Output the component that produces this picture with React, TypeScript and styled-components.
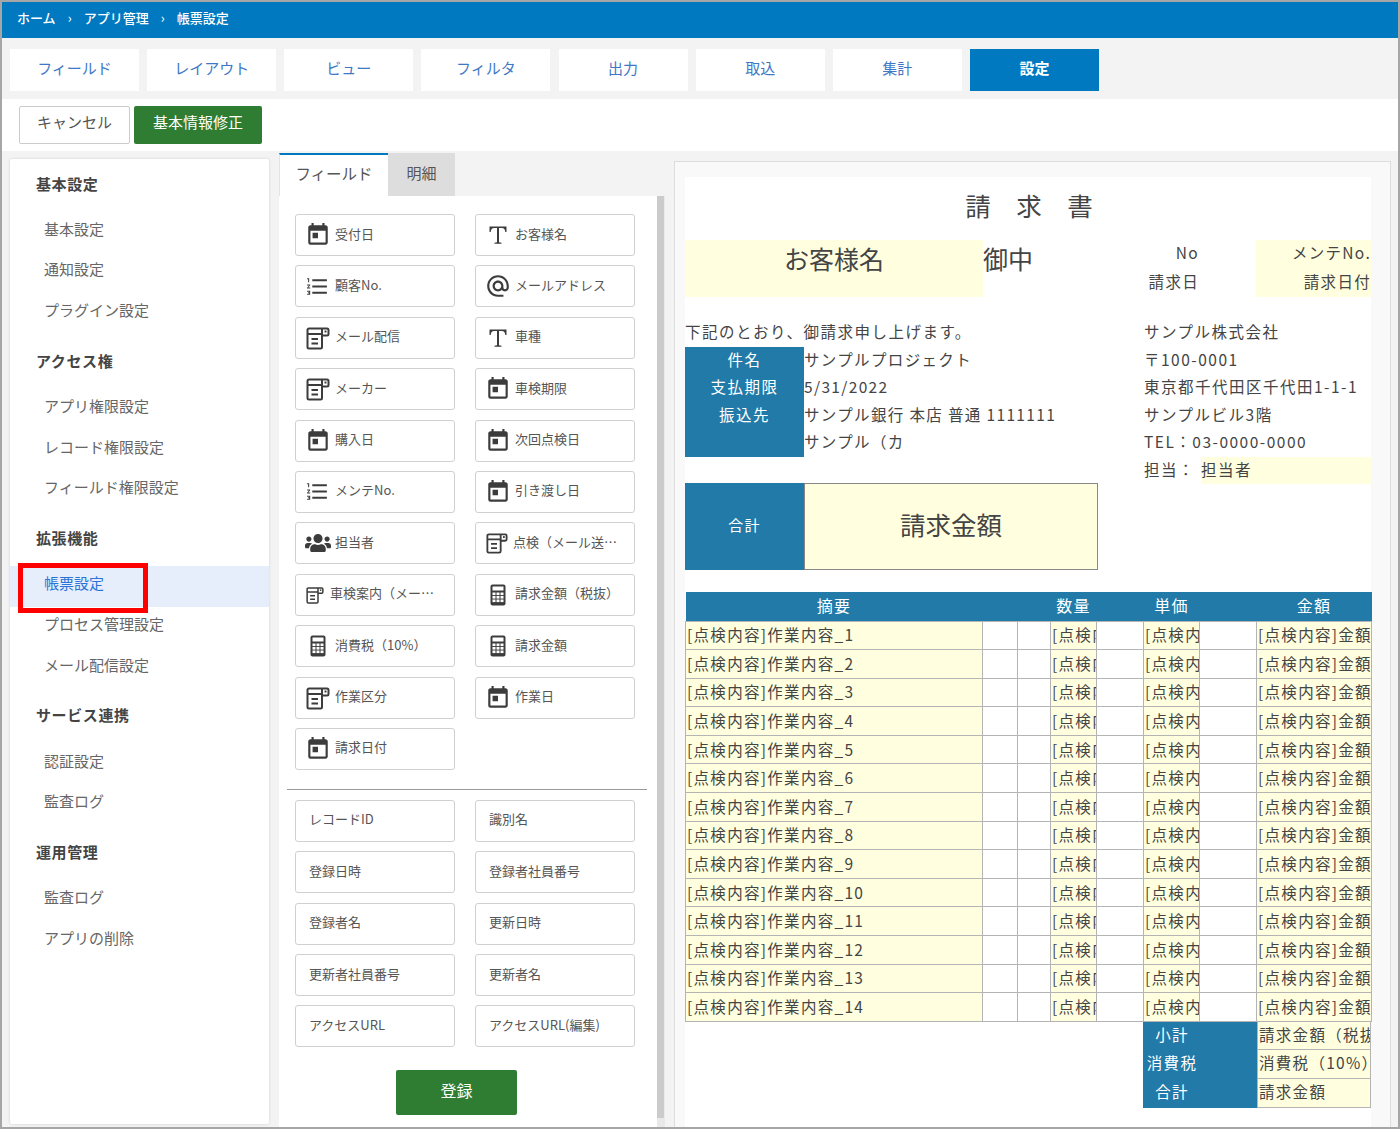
import React from 'react'
import styled, { createGlobalStyle } from 'styled-components'
import { MdToday, MdFormatListNumbered, MdAlternateEmail } from 'react-icons/md'
import { FaUsers } from 'react-icons/fa'

const GlobalStyle = createGlobalStyle`
  * {
    box-sizing: border-box;
  }
  html, body {
    margin: 0;
    padding: 0;
    background: #f3f3f3;
  }
  body {
    font-family: 'Noto Sans CJK JP', 'Roboto', sans-serif;
    color: #444;
  }
`

const Frame = styled.div`
  width: 1400px;
  height: 1129px;
  border: 2px solid #a6a6a6;
  background: #f3f3f3;
  overflow: hidden;
  display: flex;
  flex-direction: column;
`
const Breadcrumb = styled.div`
  height: 36px;
  flex: none;
  background: #0079c0;
  color: #fff;
  display: flex;
  align-items: center;
  padding: 0 0 6px 15px;
  font-size: 13px;
  font-weight: 500;
`
const Crumb = styled.span`
  display: inline-block;
`
const CrumbArrow = styled.span`
  display: inline-block;
  width: 28px;
  text-align: center;
  font-weight: 400;
`
const TabBar = styled.div`
  height: 61px;
  flex: none;
  display: flex;
  gap: 8.15px;
  padding: 11px 0 0 8px;
`
const TopTab = styled.div<{ $active?: boolean }>`
  width: 129px;
  height: 42px;
  padding-bottom: 6px;
  display: flex;
  align-items: center;
  justify-content: center;
  font-size: 15px;
  font-weight: ${p => (p.$active ? 700 : 400)};
  color: ${p => (p.$active ? '#fff' : '#3f78c6')};
  background: ${p => (p.$active ? '#0079c0' : '#fff')};
`
const ActionBar = styled.div`
  height: 52px;
  flex: none;
  background: #fff;
  display: flex;
  gap: 4px;
  padding: 7px 0 0 17px;
`
const CancelButton = styled.div`
  width: 111px;
  height: 38px;
  padding-bottom: 7px;
  border: 1px solid #ccc;
  border-radius: 2px;
  background: #fff;
  color: #555;
  font-size: 15px;
  display: flex;
  align-items: center;
  justify-content: center;
`
const GreenButton = styled.div`
  width: 128px;
  height: 38px;
  padding-bottom: 7px;
  border-radius: 2px;
  background: #2e7d32;
  color: #fff;
  font-size: 15px;
  display: flex;
  align-items: center;
  justify-content: center;
`
const Main = styled.div`
  flex: 1;
  min-height: 0;
  display: flex;
  padding: 2px 0 0 8px;
`
const Sidebar = styled.div`
  width: 259px;
  flex: none;
  height: 965px;
  margin-top: 6px;
  padding-top: 8px;
  background: #fff;
  box-shadow: 0 0 3px rgba(0, 0, 0, 0.15);
  border-radius: 2px;
`
const SideSection = styled.div`
  margin-bottom: 11px;
`
const SideHead = styled.div`
  height: 40px;
  margin-bottom: 4.5px;
  padding: 0 0 8px 26px;
  display: flex;
  align-items: center;
  font-size: 15px;
  font-weight: 700;
  letter-spacing: 0.6px;
  color: #444;
`
const SideItem = styled.div<{ $active?: boolean }>`
  position: relative;
  height: 40.6px;
  padding: 0 0 7px 34px;
  display: flex;
  align-items: center;
  font-size: 15px;
  color: ${p => (p.$active ? '#2a73d9' : '#666')};
  background: ${p => (p.$active ? '#e6eefb' : 'transparent')};
`
const RedMark = styled.div`
  position: absolute;
  left: 8px;
  top: -3px;
  width: 130px;
  height: 50px;
  border: 5px solid #f00;
  z-index: 2;
`
const Center = styled.div`
  width: 386px;
  flex: none;
  margin-left: 10px;
  display: flex;
  flex-direction: column;
`
const PanelTabs = styled.div`
  height: 43px;
  flex: none;
  display: flex;
`
const PanelTab = styled.div<{ $active?: boolean }>`
  width: ${p => (p.$active ? '109px' : '67px')};
  padding-bottom: 6px;
  display: flex;
  align-items: center;
  justify-content: center;
  font-size: ${p => (p.$active ? '15.5px' : '15px')};
  color: #555;
  background: ${p => (p.$active ? '#fff' : '#ddd')};
  border-top: 2px solid ${p => (p.$active ? '#0079c0' : '#ddd')};
  border-left: ${p => (p.$active ? '1px solid #e4e4e4' : 'none')};
`
const PanelBody = styled.div`
  flex: 1;
  min-height: 0;
  display: flex;
`
const PanelContent = styled.div`
  width: 378px;
  flex: none;
  background: #fff;
  padding: 18px 10px 0 8px;
`
const ScrollTrack = styled.div`
  width: 8px;
  flex: none;
  background: #e9e9e9;
`
const ScrollThumb = styled.div`
  width: 7px;
  height: 922px;
  background: #cbcbcb;
`
const FieldGrid = styled.div`
  display: grid;
  grid-template-columns: 160px 160px;
  column-gap: 20px;
  row-gap: 9.4px;
  padding-left: 8px;
`
const FieldButton = styled.div`
  height: 42px;
  border: 1px solid #d0d0d0;
  border-radius: 3px;
  display: flex;
  align-items: center;
  padding-right: 15px;
  font-size: 13px;
  color: #555;
  background: #fff;
`
const IconSlot = styled.span<{ $width: number }>`
  width: ${p => p.$width}px;
  margin-left: 4px;
  flex: none;
  display: flex;
  align-items: center;
  justify-content: center;
  color: #3c3c3c;
`
const FieldName = styled.span`
  min-width: 0;
  padding-bottom: 4px;
  white-space: nowrap;
  overflow: hidden;
  text-overflow: ellipsis;
`
const SystemButton = styled(FieldButton)`
  padding: 0 0 4px 13px;
`
const Divider = styled.hr`
  margin: 19px 0 10px;
  border: none;
  border-top: 1px solid #999;
  height: 0;
`
const SubmitRow = styled.div`
  display: flex;
  justify-content: center;
  padding: 23px 21px 0 0;
`
const SubmitButton = styled.div`
  width: 121px;
  height: 45px;
  padding-bottom: 6px;
  background: #2e7d32;
  border-radius: 2px;
  color: #fff;
  font-size: 16px;
  display: flex;
  align-items: center;
  justify-content: center;
`
const PreviewCard = styled.div`
  width: 717px;
  flex: none;
  height: 968px;
  margin: 8px 0 0 9px;
  padding: 15px 19px 0 10px;
  background: #f9f9f9;
  border: 1px solid #ddd;
  border-bottom: none;
  overflow: hidden;
`
const Sheet = styled.div`
  width: 686px;
  height: 100%;
  background: #fff;
  color: #444;
  font-size: 15.5px;
  letter-spacing: 1.3px;
`
const SheetTitle = styled.div`
  height: 63px;
  padding: 10px 0 0 2px;
  text-align: center;
  font-size: 25.5px;
  letter-spacing: 0;
  line-height: 36px;
`
const BillTo = styled.div`
  height: 56px;
  display: grid;
  grid-template-columns: 298px 160px 56px 57px 115px;
`
const Yellow = `background: #ffffdf;`
const CustomerName = styled.div`
  ${Yellow}
  text-align: center;
  font-size: 25px;
  letter-spacing: 0;
  line-height: 36px;
`
const Goshu = styled.div`
  font-size: 25px;
  letter-spacing: 0;
  line-height: 36px;
`
const MetaLabels = styled.div`
  text-align: right;
  white-space: nowrap;
`
const MetaValues = styled.div`
  ${Yellow}
  grid-column: 5;
  text-align: right;
  white-space: nowrap;
  overflow: hidden;
`
const MetaRow = styled.div`
  height: 28.5px;
  line-height: 24.5px;
`
const InfoBlock = styled.div`
  height: 164px;
  margin-top: 23px;
  display: grid;
  grid-template-columns: 459px 1fr;
  line-height: 25.5px;
  letter-spacing: 1.5px;
`
const InfoRow = styled.div`
  height: 27.5px;
  white-space: nowrap;
`
const Subject = styled.div`
  display: grid;
  grid-template-columns: 119px 1fr;
`
const SubjectLabels = styled.div`
  background: #217aa8;
  color: #fff;
  text-align: center;
  height: 110px;
`
const SubjectValues = styled.div`
  letter-spacing: 1.35px;
`
const StaffRow = styled(InfoRow)`
  display: flex;
`
const StaffLabel = styled.span`
  width: 57px;
  flex: none;
`
const StaffValue = styled.span`
  ${Yellow}
  flex: 1;
`
const TotalBox = styled.div`
  width: 413px;
  height: 87px;
  display: grid;
  grid-template-columns: 119px 1fr;
`
const TotalLabel = styled.div`
  background: #217aa8;
  color: #fff;
  padding-bottom: 4px;
  display: flex;
  align-items: center;
  justify-content: center;
  font-size: 15px;
`
const TotalValue = styled.div`
  ${Yellow}
  padding-bottom: 6px;
  border: 1px solid #888;
  display: flex;
  align-items: center;
  justify-content: center;
  font-size: 25.5px;
  letter-spacing: 0;
`
const ItemTable = styled.table`
  width: 686px;
  margin-top: 22px;
  border-collapse: collapse;
  table-layout: fixed;
`
const HeadCell = styled.th`
  height: 29px;
  padding: 0 0 2px;
  background: #217aa8;
  color: #fff;
  font-weight: 400;
  font-size: 16px;
  text-align: center;
  overflow: visible;
  white-space: nowrap;
`
const BodyCell = styled.td<{ $fill?: boolean }>`
  height: 28.6px;
  padding: 0 0 2px 1px;
  border: 1px solid #b4b4b4;
  white-space: nowrap;
  overflow: hidden;
  ${p => (p.$fill ? Yellow : '')}
`
const Summary = styled.div`
  display: grid;
  grid-template-columns: 114px 114px;
  width: 228px;
  margin-left: 458px;
`
const SummaryLabels = styled.div`
  background: #217aa8;
  color: #fff;
  height: 85.8px;
`
const SummaryLabel = styled.div`
  width: 58px;
  height: 28.6px;
  line-height: 24.6px;
  text-align: center;
  white-space: nowrap;
`
const SummaryValue = styled.div`
  ${Yellow}
  height: 28.6px;
  line-height: 25px;
  border: 1px solid #b4b4b4;
  border-top: none;
  padding-left: 1px;
  white-space: nowrap;
  overflow: hidden;
`

type FieldKind = 'date' | 'text' | 'list' | 'mail' | 'form' | 'user' | 'calc'
type FieldDef = { name: string; kind: FieldKind; slot?: number; size?: number }

const FormIcon = ({ size = 24 }: { size?: number }) => (
  <svg width={size} height={size} viewBox="0 0 24 24" fill="none" stroke="currentColor" strokeWidth="2">
    <path d="M1.5 4a1.5 1.5 0 0 1 1.5-1.5h18A1.5 1.5 0 0 1 22.5 4v4a1.5 1.5 0 0 1-1.5 1.5h-5V21a1.5 1.5 0 0 1-1.5 1.5H3A1.5 1.5 0 0 1 1.5 21z" />
    <path d="M1.5 8h14.5M16 2.5v7M5.5 13h6.5M5.5 17.5h6.5" />
    <rect x="18.5" y="4.5" width="2" height="2" fill="currentColor" stroke="none" />
  </svg>
)

const SerifT = () => (
  <svg width="24" height="24" viewBox="0 0 24 24" fill="currentColor">
    <path d="M3.5 3.5h17v5.5h-1.2c-.3-2.600-1.200-4-3.500-4h-2.800v14.200l2.500.6v.9H8.500v-.9l2.500-.6V5H8.200c-2.300 0-3.200 1.400-3.500 4H3.500z" />
  </svg>
)

const CalcIcon = () => (
  <svg width="16" height="22" viewBox="0 0 16 22">
    <rect x="0.500" y="0.500" width="15" height="21" rx="2" fill="#3c3c3c" />
    <rect x="2.500" y="2.500" width="11" height="4" fill="#fff" />
    {[8.500, 12, 15.500].map(y =>
      [2.500, 6.500, 10.500].map(x => <rect key={`${x}-${y}`} x={x} y={y} width="3" height="2.600" fill="#fff" />)
    )}
  </svg>
)

const FieldIcon = ({ kind, size }: { kind: FieldKind; size?: number }) => {
  switch (kind) {
    case 'date':
      return <MdToday size={26} />
    case 'text':
      return <SerifT />
    case 'list':
      return <MdFormatListNumbered size={25} />
    case 'mail':
      return <MdAlternateEmail size={26} />
    case 'form':
      return <FormIcon size={size} />
    case 'user':
      return <FaUsers size={26} />
    default:
      return <CalcIcon />
  }
}

const sideMenu = [
  { head: '基本設定', items: ['基本設定', '通知設定', 'プラグイン設定'] },
  { head: 'アクセス権', items: ['アプリ権限設定', 'レコード権限設定', 'フィールド権限設定'] },
  { head: '拡張機能', items: ['帳票設定', 'プロセス管理設定', 'メール配信設定'] },
  { head: 'サービス連携', items: ['認証設定', '監査ログ'] },
  { head: '運用管理', items: ['監査ログ', 'アプリの削除'] },
]

const topTabs = ['フィールド', 'レイアウト', 'ビュー', 'フィルタ', '出力', '取込', '集計', '設定']

const fields: FieldDef[] = [
  { name: '受付日', kind: 'date' },
  { name: 'お客様名', kind: 'text' },
  { name: '顧客No.', kind: 'list' },
  { name: 'メールアドレス', kind: 'mail' },
  { name: 'メール配信', kind: 'form' },
  { name: '車種', kind: 'text' },
  { name: 'メーカー', kind: 'form' },
  { name: '車検期限', kind: 'date' },
  { name: '購入日', kind: 'date' },
  { name: '次回点検日', kind: 'date' },
  { name: 'メンテNo.', kind: 'list' },
  { name: '引き渡し日', kind: 'date' },
  { name: '担当者', kind: 'user' },
  { name: '点検（メール送信日）', kind: 'form', slot: 33, size: 22 },
  { name: '車検案内（メール送信日）', kind: 'form', slot: 30, size: 18 },
  { name: '請求金額（税抜）', kind: 'calc' },
  { name: '消費税（10%）', kind: 'calc' },
  { name: '請求金額', kind: 'calc' },
  { name: '作業区分', kind: 'form' },
  { name: '作業日', kind: 'date' },
  { name: '請求日付', kind: 'date' },
]

const systemFields = [
  'レコードID',
  '識別名',
  '登録日時',
  '登録者社員番号',
  '登録者名',
  '更新日時',
  '更新者社員番号',
  '更新者名',
  'アクセスURL',
  'アクセスURL(編集)',
]

const columnWidths = [297, 35, 33, 46, 47, 56, 57, 115]
const rows = Array.from({ length: 14 }, (_, i) => i + 1)

const App: React.FunctionComponent = () => {
  return (
    <>
      <GlobalStyle />
      <Frame>
        <Breadcrumb>
          <Crumb>ホーム</Crumb>
          <CrumbArrow>›</CrumbArrow>
          <Crumb>アプリ管理</Crumb>
          <CrumbArrow>›</CrumbArrow>
          <Crumb>帳票設定</Crumb>
        </Breadcrumb>
        <TabBar>
          {topTabs.map(tab => (
            <TopTab key={tab} $active={tab === '設定'}>
              {tab}
            </TopTab>
          ))}
        </TabBar>
        <ActionBar>
          <CancelButton>キャンセル</CancelButton>
          <GreenButton>基本情報修正</GreenButton>
        </ActionBar>
        <Main>
          <Sidebar>
            {sideMenu.map(section => (
              <SideSection key={section.head}>
                <SideHead>{section.head}</SideHead>
                {section.items.map(item => (
                  <SideItem key={item} $active={item === '帳票設定'}>
                    {item}
                    {item === '帳票設定' && <RedMark />}
                  </SideItem>
                ))}
              </SideSection>
            ))}
          </Sidebar>
          <Center>
            <PanelTabs>
              <PanelTab $active>フィールド</PanelTab>
              <PanelTab>明細</PanelTab>
            </PanelTabs>
            <PanelBody>
              <PanelContent>
                <FieldGrid>
                  {fields.map(field => (
                    <FieldButton key={field.name}>
                      <IconSlot $width={field.slot ?? 35}>
                        <FieldIcon kind={field.kind} size={field.size} />
                      </IconSlot>
                      <FieldName>{field.name}</FieldName>
                    </FieldButton>
                  ))}
                </FieldGrid>
                <Divider />
                <FieldGrid>
                  {systemFields.map(name => (
                    <SystemButton key={name}>{name}</SystemButton>
                  ))}
                </FieldGrid>
                <SubmitRow>
                  <SubmitButton>登録</SubmitButton>
                </SubmitRow>
              </PanelContent>
              <ScrollTrack>
                <ScrollThumb />
              </ScrollTrack>
            </PanelBody>
          </Center>
          <PreviewCard>
            <Sheet>
              <SheetTitle>請　求　書</SheetTitle>
              <BillTo>
                <CustomerName>お客様名</CustomerName>
                <Goshu>御中</Goshu>
                <MetaLabels>
                  <MetaRow>No</MetaRow>
                  <MetaRow>請求日</MetaRow>
                </MetaLabels>
                <MetaValues>
                  <MetaRow>メンテNo.</MetaRow>
                  <MetaRow>請求日付</MetaRow>
                </MetaValues>
              </BillTo>
              <InfoBlock>
                <div>
                  <InfoRow>下記のとおり、御請求申し上げます。</InfoRow>
                  <Subject>
                    <SubjectLabels>
                      <InfoRow>件名</InfoRow>
                      <InfoRow>支払期限</InfoRow>
                      <InfoRow>振込先</InfoRow>
                    </SubjectLabels>
                    <SubjectValues>
                      <InfoRow>サンプルプロジェクト</InfoRow>
                      <InfoRow>5/31/2022</InfoRow>
                      <InfoRow>サンプル銀行 本店 普通 1111111</InfoRow>
                      <InfoRow>サンプル（カ</InfoRow>
                    </SubjectValues>
                  </Subject>
                </div>
                <div>
                  <InfoRow>サンプル株式会社</InfoRow>
                  <InfoRow>〒100-0001</InfoRow>
                  <InfoRow>東京都千代田区千代田1-1-1</InfoRow>
                  <InfoRow>サンプルビル3階</InfoRow>
                  <InfoRow>TEL：03-0000-0000</InfoRow>
                  <StaffRow>
                    <StaffLabel>担当：</StaffLabel>
                    <StaffValue>担当者</StaffValue>
                  </StaffRow>
                </div>
              </InfoBlock>
              <TotalBox>
                <TotalLabel>合計</TotalLabel>
                <TotalValue>請求金額</TotalValue>
              </TotalBox>
              <ItemTable>
                <colgroup>
                  {columnWidths.map((w, i) => (
                    <col key={i} style={{ width: w }} />
                  ))}
                </colgroup>
                <thead>
                  <tr>
                    <HeadCell>摘要</HeadCell>
                    <HeadCell />
                    <HeadCell />
                    <HeadCell>数量</HeadCell>
                    <HeadCell />
                    <HeadCell>単価</HeadCell>
                    <HeadCell />
                    <HeadCell>金額</HeadCell>
                  </tr>
                </thead>
                <tbody>
                  {rows.map(n => (
                    <tr key={n}>
                      <BodyCell $fill>[点検内容]作業内容_{n}</BodyCell>
                      <BodyCell />
                      <BodyCell />
                      <BodyCell $fill>[点検内容]数量</BodyCell>
                      <BodyCell />
                      <BodyCell $fill>[点検内容]単価</BodyCell>
                      <BodyCell />
                      <BodyCell $fill>[点検内容]金額</BodyCell>
                    </tr>
                  ))}
                </tbody>
              </ItemTable>
              <Summary>
                <SummaryLabels>
                  <SummaryLabel>小計</SummaryLabel>
                  <SummaryLabel>消費税</SummaryLabel>
                  <SummaryLabel>合計</SummaryLabel>
                </SummaryLabels>
                <div>
                  <SummaryValue>請求金額（税抜）</SummaryValue>
                  <SummaryValue>消費税（10%）</SummaryValue>
                  <SummaryValue>請求金額</SummaryValue>
                </div>
              </Summary>
            </Sheet>
          </PreviewCard>
        </Main>
      </Frame>
    </>
  )
}

export default App
